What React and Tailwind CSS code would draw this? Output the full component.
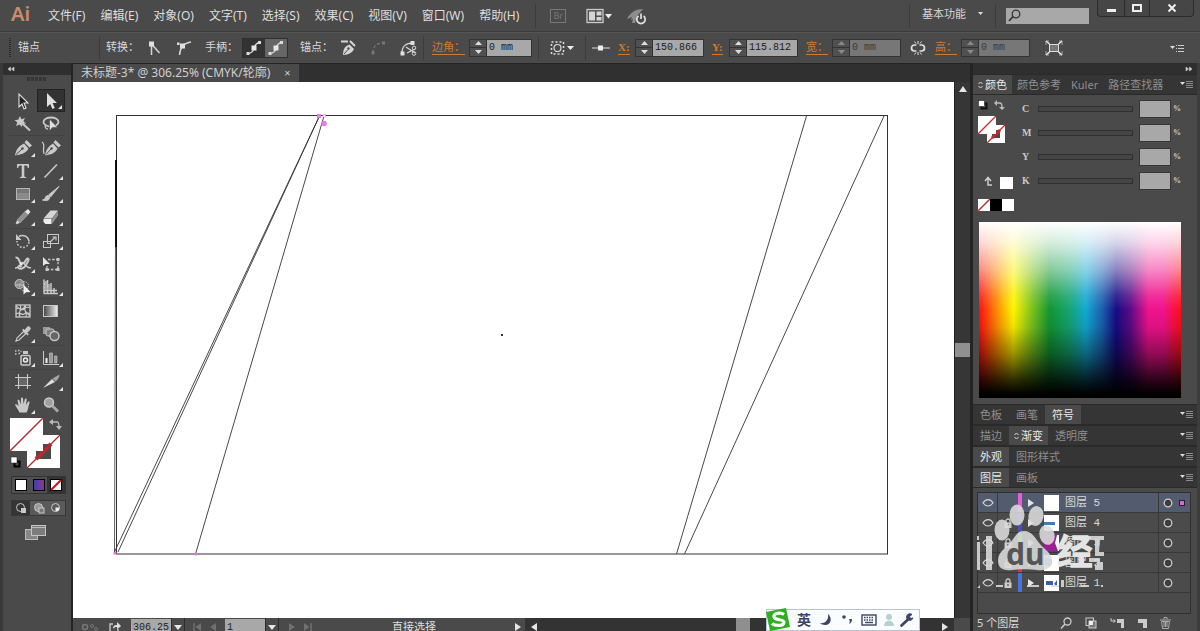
import React, { useState } from "react";

const MENUS = ["文件(F)", "编辑(E)", "对象(O)", "文字(T)", "选择(S)", "效果(C)", "视图(V)", "窗口(W)", "帮助(H)"];

const G = "#c9c9c9";

const Svg = ({ w = 20, h = 20, className = "", children }) => (
  <svg width={w} height={h} viewBox={`0 0 ${w} ${h}`} className={`shrink-0 ${className}`} fill="none" aria-hidden="true">
    {children}
  </svg>
);

// tool drawings, all on a 20x20 grid
const TOOL_GROUPS = [
  [
    { name: "选择", art: <path d="M6 3v13l3-3 2 5 2-1-2-5h4z" fill="#222" stroke="#e0e0e0" strokeWidth="1.1" /> },
    { name: "直接选择", more: true, art: <path d="M6 2v14l3.2-3 2.2 5 2.4-1-2.2-5H16z" fill="#e0e0e0" /> },
    {
      name: "魔棒",
      art: (
        <>
          <path d="M7 2l1.4 3.2L12 4l-1.6 3.2L13 9.5l-3.4.3L9 13l-2.4-2.6L3 12l1.4-3.4L1.5 6l3.7-.3z" fill={G} />
          <path d="M9.5 9.5l7.5 7" stroke={G} strokeWidth="2" />
        </>
      ),
    },
    {
      name: "套索",
      art: (
        <>
          <ellipse cx="10" cy="8" rx="7.5" ry="4.5" stroke={G} strokeWidth="1.8" />
          <path d="M5 11c-2 2 0 4 2 4" stroke={G} strokeWidth="1.3" />
          <path d="M8.5 5v12l3-3.6h5z" fill="#e0e0e0" stroke="#4a4a4a" strokeWidth=".6" />
        </>
      ),
    },
  ],
  [
    {
      name: "钢笔",
      more: true,
      art: (
        <>
          <path d="M2 17.5C3 11 6 8 11 5.500l4.500 5c-2 4-6.500 6-13.500 7z" fill={G} />
          <path d="M11.500 4.500l2-2.500 5.500 5.500-2.500 2z" fill={G} />
          <path d="M3 16.500l6-5.500" stroke="#4a4a4a" strokeWidth="1" />
          <circle cx="9.500" cy="10.500" r="1.200" fill="#4a4a4a" />
        </>
      ),
    },
    {
      name: "曲率",
      art: (
        <>
          <path d="M1 4c4 2 0 7 2 12" stroke={G} strokeWidth="1.300" />
          <path d="M4 17.5C5 11 8 8 12 5.500l4.500 5c-2 4-5.500 6-12.500 7z" fill={G} />
          <path d="M12.500 4.500l2-2.500L20 7.500l-2.500 2z" fill={G} />
          <path d="M5 16.500l5-5.500" stroke="#4a4a4a" />
          <circle cx="10.500" cy="10.500" r="1.200" fill="#4a4a4a" />
        </>
      ),
    },
    { name: "文字", more: true, art: <path d="M4 3h12v4h-1.200c-.2-1.600-.9-2.400-2.400-2.400H11.300V15c0 .8.400 1.100 1.900 1.200V17H6.800v-.8c1.500-.1 1.900-.4 1.900-1.200V4.600H7.600C6.100 4.600 5.400 5.400 5.200 7H4z" fill={G} /> },
    { name: "直线", more: true, art: <path d="M3.500 16.500l12.500-13" stroke={G} strokeWidth="1.600" /> },
    {
      name: "矩形",
      more: true,
      art: (
        <>
          <rect x="3.500" y="4.500" width="13" height="11" fill="#8a8a8a" stroke="#b5b5b5" />
          <rect x="4" y="5" width="12" height="4" fill="#777" />
        </>
      ),
    },
    {
      name: "画笔",
      more: true,
      art: (
        <>
          <path d="M18 2.500L9.500 13 7.500 11z" fill={G} stroke={G} />
          <path d="M8.500 12.500c1 3-2 5-7 3.500 3 0 2.500-3.500 4.500-4.500z" fill={G} stroke={G} />
        </>
      ),
    },
    {
      name: "铅笔",
      more: true,
      art: (
        <>
          <path d="M3 17l1.500-4.500 8-8.500 3 3-8 8.500z" fill="#8f8f8f" stroke="#a8a8a8" strokeWidth=".7" />
          <path d="M12 4.500l3-2.500 2.500 3L15 7.500z" fill="#e8e8e8" />
          <path d="M3 17l1.200-3.500 2.300 2.300z" fill="#e0e0e0" />
        </>
      ),
    },
    {
      name: "橡皮擦",
      more: true,
      art: (
        <>
          <path d="M2.500 11.500l7-8h7.500l-6 8z" fill="#d5d5d5" />
          <path d="M2.500 12h8v5h-6l-2-2z" fill="#eee" />
          <path d="M11 12l6-8v4.500L11 17z" fill="#8e8e8e" />
        </>
      ),
    },
  ],
  [
    {
      name: "旋转",
      more: true,
      art: (
        <>
          <path d="M6 5.500a6.500 6.500 0 0 1 10 5" stroke={G} strokeWidth="1.500" />
          <path d="M16 11a6 6 0 0 1-12-1" stroke={G} strokeWidth="1.500" strokeDasharray="1.800 1.600" />
          <path d="M3 3v6h5.500z" fill={G} />
        </>
      ),
    },
    {
      name: "比例缩放",
      more: true,
      art: (
        <>
          <rect x="6.500" y="3.500" width="11" height="9" stroke={G} />
          <rect x="2.500" y="10.500" width="7" height="6" stroke={G} />
          <path d="M9 11l5-4.500M11.500 6h3.500v3.500" stroke={G} strokeWidth="1.200" />
        </>
      ),
    },
    {
      name: "宽度",
      more: true,
      art: (
        <>
          <path d="M2.500 3.500c5-.5 2.500 6 6.500 6s2.500-3.500 5.500-5c2.500 0 0 3.500-1.500 6.500s-6 5-7.500 3c-1-1.500 1-3 3-1" stroke={G} strokeWidth="2" />
          <path d="M2 14c3 0 5-2 7-5s4 7 9 4.500" stroke={G} strokeWidth="1.500" />
          <circle cx="8" cy="10" r="1.500" fill="#eee" />
        </>
      ),
    },
    {
      name: "自由变换",
      art: (
        <>
          <path d="M7 5.500h10v10H6V12" stroke={G} strokeWidth="1.300" strokeDasharray="2.500 1.600" />
          <path d="M2 3v9l2.500-2H9z" fill="#e5e5e5" />
          <path d="M15.500 4h3v3h-3zM15.500 14h3v3h-3zM4.500 14h3v3h-3z" fill={G} />
        </>
      ),
    },
    {
      name: "形状生成器",
      more: true,
      art: (
        <>
          <circle cx="6.500" cy="7" r="4.500" fill="#858585" stroke={G} />
          <circle cx="11" cy="9" r="4.500" stroke={G} strokeDasharray="1.500 1" />
          <path d="M3 8h8" stroke={G} />
          <path d="M10.500 7.500v10l2.600-2.200 4.400-.3z" fill="#eee" />
        </>
      ),
    },
    {
      name: "透视网格",
      more: true,
      art: (
        <>
          <path d="M3 2.500v14M6.500 3v13.500M10 6v10.500M3 6l7 3M3 10l7 2M3 13.500h13M2.500 16.500H17M13 11v5.500" stroke={G} strokeWidth="1.500" />
          <path d="M4 4h2v9H4zM7 7h3v6H7z" fill="#a5a5a5" />
        </>
      ),
    },
  ],
  [
    {
      name: "网格",
      art: (
        <>
          <rect x="3" y="4" width="14" height="12" stroke={G} strokeWidth="1.300" />
          <path d="M3 8c4-3 5 3 8 0s3-1 6-2M3 13c4-3 6 2 8 0s3-2 6 0M7 4c3 4-3 8 0 12M12 4c-3 4 3 7 1 12M3 5l5 4 5-4M12 10l5 5" stroke={G} strokeWidth="1.200" />
        </>
      ),
    },
    {
      name: "渐变",
      art: (
        <>
          <defs>
            <linearGradient id="toolGrad">
              <stop offset="0" stopColor="#444" />
              <stop offset="1" stopColor="#f0f0f0" />
            </linearGradient>
          </defs>
          <rect x="2.500" y="4.500" width="14" height="11" fill="url(#toolGrad)" stroke={G} />
        </>
      ),
    },
    {
      name: "吸管",
      more: true,
      art: (
        <>
          <path d="M3 17l1-3 6.500-6.500 2.200 2.200L6 16z" stroke={G} strokeWidth="1.200" />
          <path d="M9 6l5.500 5.500 1.300-1.300-1.500-1.500L17.500 5.500c1-1.500-1.500-4-3-3L11.500 6l-1.200-1.200z" fill={G} />
        </>
      ),
    },
    {
      name: "混合",
      art: (
        <>
          <path d="M2 3h7v7H2z" fill="#999" />
          <rect x="5" y="5" width="8" height="7" rx="2" fill="#7d7d7d" stroke={G} />
          <circle cx="13.500" cy="12" r="4.500" fill="#666" stroke={G} strokeWidth="1.400" />
        </>
      ),
    },
  ],
  [
    {
      name: "符号喷枪",
      more: true,
      art: (
        <>
          <rect x="8" y="7.500" width="9" height="9.500" rx="1" stroke={G} strokeWidth="1.500" />
          <path d="M10 3h5v3h-5z" fill={G} />
          <circle cx="12.500" cy="12" r="2" stroke="#eee" strokeWidth="1.500" />
          <path d="M2 3h1.500M5 2.500h1.500M2 6h1.500M5.500 5.500h1.500M7.500 3.500h1" stroke={G} strokeWidth="1.500" />
        </>
      ),
    },
    {
      name: "柱形图",
      more: true,
      art: (
        <>
          <path d="M2.500 3v13.500H18" stroke={G} />
          <path d="M4.500 10h2v5h-2z" fill="#eee" />
          <path d="M8.500 5h3v10h-3z" fill="#999" stroke={G} strokeWidth=".6" />
          <path d="M13.500 8h2.500v7h-2.500z" fill="#999" stroke={G} strokeWidth=".6" />
        </>
      ),
    },
  ],
  [
    {
      name: "画板",
      art: (
        <>
          <rect x="5.500" y="5.500" width="9" height="8" fill="#666" />
          <path d="M5.500 2v15M14.500 2v15M2 5.500h16M2 13.500h16" stroke={G} strokeWidth="1.100" />
        </>
      ),
    },
    {
      name: "切片",
      more: true,
      art: (
        <>
          <path d="M2 16l9-9 3 3z" fill="#e0e0e0" />
          <path d="M11.500 6.500L18.500 2.500c0 2.500-1.500 5-4 7z" fill="#a5a5a5" />
        </>
      ),
    },
    {
      name: "抓手",
      more: true,
      art: <path d="M6.500 17.500C5 14.500 3 12 2 9.500c1.500-.8 2.600.5 3.500 1.500L4.500 5c1.400-.8 2 .3 2.300 1.500l.9 3L8 3c1.200-1 2-.2 2.100 1l.4 5 1.500-5.300c1.200-.7 1.900.1 1.700 1.300L12.900 10l2.300-3.500c1.200-.4 1.700.4 1.300 1.500-1.300 3-1 6.500-3 9.500z" fill={G} />,
    },
    {
      name: "缩放",
      art: (
        <>
          <circle cx="8" cy="7.500" r="4.500" fill="#a0a0a0" stroke={G} strokeWidth="1.500" />
          <path d="M11.500 11l5.500 5.500" stroke="#a8a8a8" strokeWidth="2.800" />
        </>
      ),
    },
  ],
];

const Toolbox = () => {
  const [tool, setTool] = useState("直接选择");
  return (
    <aside className="flex w-[73px] shrink-0 flex-col border-l-[3px] border-r-2 border-l-[#3a3a3a] border-r-[#242424] bg-[#4a4a4a]">
      <div className="flex h-3 items-center bg-[#2f2f2f] pl-1">
        <Svg w={8} h={6}>
          <path d="M3.500 1L1 3l2.500 2zM7 1L4.500 3 7 5z" fill="#ccc" stroke="#ccc" strokeWidth=".6" />
        </Svg>
      </div>
      <div className="flex h-3.5 justify-center pt-0.5">
        <Svg w={20} h={4}>
          <path d="M0 1h20M0 3h20" stroke="#222" strokeDasharray="3 1" />
        </Svg>
      </div>
      <div className="flex flex-col px-1.5">
        {TOOL_GROUPS.map((group, i) => (
          <div key={i} className={`grid grid-cols-2 ${i ? "border-t border-[#424242]" : ""}`}>
            {group.map((t) => (
              <button
                key={t.name}
                aria-label={t.name}
                onClick={() => setTool(t.name)}
                className={`relative flex h-[23px] items-center justify-center ${tool === t.name ? "border border-[#232323] bg-[#333]" : ""}`}
              >
                <Svg w={20} h={20}>{t.art}</Svg>
                {t.more && (
                  <svg width="4" height="4" className="absolute right-0.5 bottom-0.5" aria-hidden="true">
                    <path d="M4 0v4H0z" fill="#e5e5e5" />
                  </svg>
                )}
              </button>
            ))}
          </div>
        ))}
      </div>
      <div className="pl-1.5">
        <Svg w={56} h={54}>
          <path d="M18 19h33v33H18zM27 28v15h15V28z" fill="#fff" fillRule="evenodd" />
          <path d="M18 52l33-33" stroke="#b22b2f" strokeWidth="1.300" />
          <path d="M27 43l15-15" stroke="#b22b2f" strokeWidth="4" />
          <rect x="1" y="2" width="33" height="33" fill="#fff" />
          <path d="M1 35L34 2" stroke="#b22b2f" strokeWidth="1.500" />
          <path d="M43 6h5c2 0 2 2 2 5" stroke="#bbb" strokeWidth="1.300" />
          <path d="M44 3v6l-4-3zM47 10h6l-3 4z" fill="#bbb" />
          <rect x="5.500" y="45.500" width="5" height="5" stroke="#000" strokeWidth="2" />
          <rect x="2" y="41" width="6" height="6" fill="#fff" stroke="#222" strokeWidth=".5" />
        </Svg>
      </div>
      <div className="mt-1.5 ml-2 flex h-[18px] w-[55px] border border-[#333]">
        <button aria-label="颜色" className="flex flex-1 items-center justify-center bg-[#505050]">
          <span className="size-3 border border-black bg-white" />
        </button>
        <button aria-label="渐变" className="flex flex-1 items-center justify-center bg-[#505050]">
          <span className="size-3 border border-black bg-linear-to-r from-[#3a3ea8] to-[#8a3690]" />
        </button>
        <button aria-label="无" className="flex flex-1 items-center justify-center bg-[#333]">
          <Svg w={12} h={12}>
            <rect x=".5" y=".5" width="11" height="11" fill="#fff" stroke="#000" />
            <path d="M1 11L11 1" stroke="#d0111b" strokeWidth="2" />
          </Svg>
        </button>
      </div>
      <div className="mt-1.5 ml-2 flex h-4 w-[55px] border border-[#383838]">
        {[0, 1, 2].map((n) => (
          <button key={n} aria-label={`绘图模式 ${n + 1}`} className={`flex flex-1 items-center justify-center ${n === 0 ? "bg-[#353535]" : "bg-[#5a5a5a]"}`}>
            <Svg w={12} h={12}>
              <circle cx="5.500" cy="5.500" r="4" fill={n === 1 ? "#999" : "none"} stroke={G} />
              {n < 2 ? <rect x="6" y="6" width="5" height="5" fill={n ? "#777" : G} stroke={n ? G : "none"} /> : <path d="M5.500 5.500h4a4 4 0 0 1-4 4z" fill="#eee" />}
            </Svg>
          </button>
        ))}
      </div>
      <button aria-label="屏幕模式" className="mt-2 ml-[22px] w-[22px]">
        <Svg w={22} h={17}>
          <rect x=".5" y="5.500" width="12" height="10" fill="#888" stroke="#bbb" />
          <rect x="6.500" y="1.500" width="14" height="10" fill="#7c7c7c" stroke="#c5c5c5" />
          <path d="M7 3.500h13" stroke="#bbb" />
        </Svg>
      </button>
    </aside>
  );
};

const Divider = () => <span className="h-6 w-px shrink-0 bg-[#3c3c3c]" />;

const Spinner = ({ label, value, disabled, wide = true }) => (
  <div className={`flex h-[18px] shrink-0 border border-[#333] ${wide ? "w-[69px]" : "w-[63px]"}`}>
    <div className="flex w-4 shrink-0 flex-col bg-[#505050]">
      <button aria-label={`${label} 增加`} disabled={disabled} className="flex flex-1 items-center justify-center border-b border-[#333]">
        <Svg w={7} h={4}><path d="M3.500 0L7 4H0z" fill={disabled ? "#8a8a8a" : "#ddd"} /></Svg>
      </button>
      <button aria-label={`${label} 减少`} disabled={disabled} className="flex flex-1 items-center justify-center">
        <Svg w={7} h={4}><path d="M3.500 4L7 0H0z" fill={disabled ? "#8a8a8a" : "#ddd"} /></Svg>
      </button>
    </div>
    <input
      aria-label={label}
      defaultValue={value}
      disabled={disabled}
      className={`min-w-0 flex-1 border-l border-[#333] pl-0.5 font-['Liberation_Mono',monospace] text-[10px] ${disabled ? "bg-[#777] text-[#3c3c3c]" : "bg-[#a8a8a8] text-[#1c1c1c]"}`}
    />
  </div>
);

const OrangeLabel = ({ children }) => (
  <button className="shrink-0 border-b border-[#d07a2c] text-[11px] leading-[14px] text-[#d07a2c]">{children}</button>
);

const IconCell = ({ label, dim, className = "w-[30px]", children }) => (
  <button aria-label={label} className={`flex h-5 shrink-0 items-center justify-center ${dim ? "opacity-40" : ""} ${className}`}>
    {children}
  </button>
);

const handleArt = (
  <>
    <path d="M2.500 14.500C7 14.500 8 12 9 9s3-5 5.500-5.500" stroke="#ddd" strokeWidth="1.300" />
    <path d="M6.500 6.500h5v5h-5z" fill="#e8e8e8" />
    <path d="M13 2h3v3h-3zM1.500 13h3v3h-3z" fill="#ddd" />
  </>
);

const ControlBar = () => (
  <div className="flex h-8 shrink-0 items-center overflow-hidden border-t border-[#3a3a3a] bg-[#4a4a4a] pr-4 pl-2 text-[11px] text-[#d8d8d8] shadow-[inset_0_1px_0_#555]">
    <Svg w={4} h={20}><path d="M2 0v20" stroke="#2d2d2d" strokeWidth="2" strokeDasharray="1 1" /></Svg>
    <span className="ml-1.5 w-[81px] shrink-0">锚点</span>
    <Divider />
    <span className="ml-1.5 shrink-0">转换：</span>
    <IconCell label="尖角">
      <Svg w={18} h={18}><path d="M6.500 5v11M6.500 5l8 9" stroke="#d5d5d5" strokeWidth="1.500" /><path d="M4 2.500h5v5H4z" fill="#e0e0e0" /></Svg>
    </IconCell>
    <IconCell label="平滑">
      <Svg w={18} h={18}><path d="M4.500 16C5 9 8 4 16 3" stroke="#d5d5d5" strokeWidth="1.500" /><path d="M5 4.500h5v5H5zM2 3.500h2.500V6H2z" fill="#e0e0e0" /></Svg>
    </IconCell>
    <span className="ml-1.5 shrink-0">手柄：</span>
    <div className="ml-1 flex h-5 shrink-0 border border-[#2e2e2e]">
      <button aria-label="显示手柄" className="flex w-[22px] items-center justify-center bg-[#333]"><Svg w={18} h={18}>{handleArt}</Svg></button>
      <button aria-label="隐藏手柄" className="flex w-[22px] items-center justify-center bg-[#666]"><Svg w={18} h={18}>{handleArt}</Svg></button>
    </div>
    <span className="ml-3 shrink-0">锚点：</span>
    <IconCell label="删除锚点">
      <Svg w={18} h={18}>
        <path d="M4 16c0-6 2-9 6.500-10.500L15 10c-2 4-5 5.500-11 6z" fill="#d5d5d5" />
        <path d="M2 2.500h7M11 2l5 5" stroke="#d5d5d5" strokeWidth="2" />
        <path d="M5 15l4-4.500" stroke="#4a4a4a" />
        <circle cx="9.500" cy="9.500" r="1.200" fill="#4a4a4a" />
      </Svg>
    </IconCell>
    <IconCell label="连接" dim>
      <Svg w={18} h={18}><path d="M4 14c0-6 3-10 10-10" stroke="#bbb" strokeWidth="1.300" strokeDasharray="3 2" /><path d="M2.500 12.500h3v3h-3zM13 2.500h3v3h-3z" fill="#bbb" /></Svg>
    </IconCell>
    <IconCell label="剪切路径">
      <Svg w={18} h={18}>
        <path d="M3 14C3 7 7 4 14 4M7 8l9 6M8 14l8-4" stroke="#d5d5d5" strokeWidth="1.300" />
        <path d="M1.500 12.500h4v4h-4zM11.500 2h4v4h-4z" fill="#e0e0e0" />
        <circle cx="15" cy="9" r="1.800" stroke="#d5d5d5" /><circle cx="15" cy="14.500" r="1.800" stroke="#d5d5d5" />
      </Svg>
    </IconCell>
    <Divider />
    <span className="ml-2 flex shrink-0"><OrangeLabel>边角：</OrangeLabel></span>
    <span className="ml-1 flex"><Spinner label="边角" value="0 mm" wide={false} /></span>
    <span className="ml-1.5 flex"><Divider /></span>
    <IconCell label="对齐" className="w-[46px]">
      <Svg w={24} h={16}>
        <rect x="1.500" y="2" width="12" height="12" stroke="#ddd" strokeWidth="1.500" strokeDasharray="2 2" />
        <circle cx="7.500" cy="8" r="3.500" stroke="#ddd" strokeWidth="1.200" />
        <path d="M17 6h7l-3.500 4z" fill="#eee" />
      </Svg>
    </IconCell>
    <Divider />
    <IconCell label="参考点"><Svg w={18} h={8}><path d="M0 4h18" stroke="#ddd" /><path d="M6 1.500h5v5H6z" fill="#eee" /></Svg></IconCell>
    <span className="ml-0.5 flex w-[11px]"><OrangeLabel><span className="font-['Liberation_Serif',serif] font-bold">X:</span></OrangeLabel></span>
    <span className="ml-1.5 flex"><Spinner label="X" value="150.866 mm" /></span>
    <span className="ml-2 flex w-[11px]"><OrangeLabel><span className="font-['Liberation_Serif',serif] font-bold">Y:</span></OrangeLabel></span>
    <span className="ml-1.5 flex"><Spinner label="Y" value="115.812 mm" /></span>
    <span className="ml-2 flex"><OrangeLabel>宽：</OrangeLabel></span>
    <span className="ml-1 flex"><Spinner label="宽" value="0 mm" disabled /></span>
    <IconCell label="约束宽高比例" className="w-[34px]">
      <Svg w={16} h={16}>
        <path d="M6.500 5H4.500a3 3 0 0 0 0 6h2M9.500 5h2a3 3 0 0 1 0 6h-2" stroke="#e0e0e0" strokeWidth="1.700" />
        <path d="M8 1v3M8 12v3M4.500 1.500L6 3.500M11.500 1.500L10 3.500M4.500 14.500L6 12.500M11.500 14.500L10 12.500" stroke="#ddd" />
      </Svg>
    </IconCell>
    <OrangeLabel>高：</OrangeLabel>
    <span className="ml-1 flex"><Spinner label="高" value="0 mm" disabled /></span>
    <IconCell label="隔离" className="w-[48px]">
      <Svg w={18} h={16}>
        <rect x="4.500" y="4.500" width="9" height="7" fill="#777" stroke="#ddd" />
        <path d="M1 1l3.500 3M17 1l-3.500 3M1 15l3.500-3M17 15l-3.500-3" stroke="#eee" strokeWidth="1.500" />
        <path d="M1 5V1h3M17 5V1h-3M1 11v4h3M17 11v4h-3" stroke="#ccc" strokeWidth=".7" />
      </Svg>
    </IconCell>
    <button aria-label="面板菜单" className="ml-auto">
      <Svg w={14} h={10}><path d="M0 3h5L2.500 6z" fill="#ddd" /><path d="M6 2.500h8M6 5.500h8M6 8.500h8" stroke="#ccc" strokeDasharray="1 1 8 0" /></Svg>
    </button>
  </div>
);

const MenuBar = () => (
  <header className="flex h-[31px] shrink-0 items-center bg-[#4a4a4a] pr-1.5 pl-[11px] text-[#dedede]">
    <span className="w-[37px] shrink-0 pb-1 text-[20px] leading-6 font-semibold text-[#c98d69]">Ai</span>
    <nav className="flex shrink-0 gap-[15px]">
      {MENUS.map((m) => (
        <button key={m} className="text-[12px] leading-5 whitespace-nowrap">{m}</button>
      ))}
    </nav>
    <span className="ml-4 flex"><Divider /></span>
    <button aria-label="Bridge" className="ml-3.5 flex h-[14px] w-4 shrink-0 items-center justify-center border border-[#777] text-[9px] leading-none text-[#777]">Br</button>
    <button aria-label="排列文档" className="ml-5 shrink-0">
      <Svg w={26} h={16}>
        <rect x="1" y="1.500" width="16" height="13" stroke="#ccc" strokeWidth="1.300" />
        <path d="M3 3.500h6v9H3zM10.500 3.500h5v4h-5zM10.500 9h5v3.500h-5z" fill="#d5d5d5" />
        <path d="M19 6h7l-3.500 4.500z" fill="#eee" />
      </Svg>
    </button>
    <button aria-label="GPU 性能" className="ml-3.5 shrink-0">
      <Svg w={22} h={18}>
        <path d="M1 12C4 6 9 2 17 2L11 9 9 16H6l1-4-2 1 1-3z" fill="#8d8d8d" />
        <path d="M12.500 9a4.200 4.200 0 1 0 5 0" stroke="#e0e0e0" strokeWidth="1.700" />
        <path d="M15 6.500V12" stroke="#e0e0e0" strokeWidth="1.700" />
      </Svg>
    </button>
    <div className="ml-auto flex h-full shrink-0 items-center">
      <Divider />
      <button className="ml-3 flex items-center gap-3 pb-1 text-[11px] leading-5 text-[#d5d5d5]">
        基本功能
        <Svg w={5} h={3}><path d="M0 0h5L2.500 3z" fill="#ddd" /></Svg>
      </button>
      <span className="ml-3 flex"><Divider /></span>
      <label className="ml-2.5 flex h-4 w-[83px] items-center bg-[#a8a8a8] pl-0.5">
        <Svg w={13} h={13}><circle cx="8" cy="5" r="3.800" stroke="#333" strokeWidth="1.300" /><path d="M5 7.500L1 12" stroke="#333" strokeWidth="1.800" /></Svg>
        <input type="search" aria-label="搜索" className="min-w-0 flex-1 text-[10px] text-[#222] outline-none" />
      </label>
      <div className="ml-2 flex h-[17px] self-start rounded-b-sm border border-t-0 border-[#2c2c2c] bg-[#464646]">
        <button aria-label="最小化" className="flex w-[27px] items-center justify-center border-r border-[#2c2c2c]">
          <Svg w={10} h={10}><path d="M1 6h9v3H1z" fill="#eee" /></Svg>
        </button>
        <button aria-label="最大化" className="flex w-[25px] items-center justify-center border-r border-[#2c2c2c]">
          <Svg w={10} h={10}><rect x="1" y="2" width="8" height="6" stroke="#eee" strokeWidth="2" /></Svg>
        </button>
        <button aria-label="关闭" className="flex w-[43px] items-center justify-center">
          <Svg w={10} h={10}><path d="M1.500 1.500l7 7M8.500 1.500l-7 7" stroke="#eee" strokeWidth="2" /></Svg>
        </button>
      </div>
    </div>
  </header>
);

// outline-mode artwork on the canvas
const Artwork = () => (
  <svg viewBox="0 0 881 536" className="block h-full w-full bg-white" preserveAspectRatio="xMinYMin meet" role="img" aria-label="画布">
    <g stroke="#333" fill="none">
      <rect x="43.500" y="33.500" width="771" height="438.500" />
      <path d="M251 34L122.500 472M733.500 34L603.500 472M811 34L611.500 472" strokeWidth=".9" />
      <path d="M246 35L41.500 470M246 35L45 470" strokeWidth=".9" />
      <path d="M43 78v87" stroke="#000" strokeWidth="1.800" />
      <path d="M42.500 165L41.500 471" strokeWidth=".8" />
      <path d="M428 252l2 2M430 252l-2 2" />
    </g>
    <g fill="#e07be0">
      <path d="M244 32h4v4h-4zM40.500 470h3v2.500h-3zM121.500 471h2.500v2.500h-2.500z" />
      <circle cx="251" cy="41.500" r="2.800" />
      <rect x="250" y="32.500" width="2.500" height="2.500" fill="#fff" stroke="#e07be0" strokeWidth=".6" />
    </g>
  </svg>
);

const Arrow = ({ dir, dim }) => (
  <Svg w={6} h={8}><path d={dir === "left" ? "M6 0v8L0 4z" : "M0 0v8l6-4z"} fill={dim ? "#707070" : "#e5e5e5"} /></Svg>
);

const DownBox = ({ label }) => (
  <button aria-label={label} className="flex h-5 w-3.5 shrink-0 items-center justify-center border border-[#2e2e2e] bg-[#4a4a4a]">
    <Svg w={8} h={5}><path d="M0 0h8L4 5z" fill="#e5e5e5" /></Svg>
  </button>
);

const StatusBar = () => (
  <div className="h-[13px] shrink-0 overflow-hidden bg-[#4a4a4a]">
    <div className="flex h-[18px] items-center">
      <div className="flex w-[452px] shrink-0 items-center pl-2">
        <Svg w={18} h={8}><circle cx="4" cy="4" r="2.500" stroke="#777" strokeWidth="1.500" /><circle cx="11" cy="3" r="1.500" stroke="#777" /><circle cx="15" cy="6" r="1.500" stroke="#777" /></Svg>
        <span className="ml-2.5 flex"><Svg w={12} h={12}><path d="M4 3H1v8h8V8" stroke="#ccc" strokeWidth="1.300" /><path d="M4 8c0-3 1-4 4-4V1l4 4-4 3.500V6C6 6 5 6.500 4 8z" fill="#ddd" /></Svg></span>
        <input aria-label="缩放比例" defaultValue="306.25" className="ml-2.5 h-4 w-10 shrink-0 bg-[#a8a8a8] pl-0.5 font-['Liberation_Mono',monospace] text-[10px] text-[#222]" />
        <DownBox label="选择缩放比例" />
        <span className="ml-2 flex w-8 items-center gap-2"><svg width="9" height="8"><path d="M1 0v8" stroke="#707070" strokeWidth="1.500" /><path d="M8 0v8L2.500 4z" fill="#707070" /></svg><Arrow dir="left" dim /></span>
        <input aria-label="画板" defaultValue="1" className="h-4 w-10 shrink-0 bg-[#a8a8a8] pl-0.5 font-['Liberation_Mono',monospace] text-[10px] text-[#222]" />
        <DownBox label="选择画板" />
        <span className="ml-2.5 flex items-center gap-2"><Arrow dir="right" dim /><svg width="9" height="8"><path d="M8 0v8" stroke="#707070" strokeWidth="1.500" /><path d="M1 0v8l5.500-4z" fill="#707070" /></svg></span>
        <span className="ml-20 text-[11px] leading-5 text-[#ddd]">直接选择</span>
        <span className="ml-auto flex pr-1"><Arrow dir="right" /></span>
      </div>
      <div className="flex h-[18px] flex-1 items-center bg-[#333] px-1.5">
        <Arrow dir="left" />
        <span className="flex h-[18px] flex-1 justify-center pl-1.5"><span className="h-[18px] w-3.5 bg-[#8f8f8f]" /></span>
        <Arrow dir="right" />
      </div>
      <div className="h-[18px] w-4 bg-[#4a4a4a]" />
    </div>
  </div>
);

const ImeBar = () => (
  <div className="absolute right-[50px] bottom-0 flex h-[22px] items-center border border-[#b9c3d3] bg-[#fbfcfe] text-[#3d4466]">
    <Svg w={26} h={24} className="-ml-0.5">
      <path d="M1 4L21 0l4 19-20 4z" fill="#2fae1e" />
      <path d="M19 6.500C15.500 4 8 5 9 9s10.500 1.500 10 5.500S10 18 7 15.500" stroke="#fff" strokeWidth="3.200" />
    </Svg>
    <span className="ml-1.5 text-[14px] leading-5 font-bold">英</span>
    <Svg w={14} h={14} className="ml-2"><path d="M9 1c4 3 4 11-3 11-2 0-4-1-5-2 5 1 9-3 8-9z" fill="currentColor" /></Svg>
    <Svg w={12} h={14} className="ml-2"><circle cx="3" cy="4" r="1.800" fill="currentColor" /><path d="M8 6h3c0 3-1 4-3 5 1-2 1-3 0-5z" fill="currentColor" /></Svg>
    <Svg w={16} h={12} className="ml-2"><rect x="1" y="1" width="14" height="10" stroke="currentColor" strokeWidth="1.400" /><path d="M3 3.500h10M3 6h10" stroke="currentColor" strokeWidth="1.400" strokeDasharray="1.500 1" /><path d="M4 8.500h8" stroke="currentColor" strokeWidth="1.400" /></Svg>
    <Svg w={12} h={14} className="ml-1.5"><circle cx="6" cy="4" r="3" fill="#b5d1cf" /><path d="M1 13c0-7 10-7 10 0z" fill="#b5d1cf" /></Svg>
    <Svg w={16} h={16} className="mx-1"><path d="M2.500 13.500L9 7.500" stroke="currentColor" strokeWidth="2.800" strokeLinecap="round" /><path d="M13 2.500a3.300 3.300 0 1 0 1 3.500l-2.500.5-1-2z" fill="currentColor" stroke="currentColor" /></Svg>
  </div>
);

const Document = () => (
  <main className="relative flex min-w-0 flex-1 flex-col bg-[#303030]">
    <div className="flex h-[19px] shrink-0 border-t border-[#242424]">
      <div className="flex items-center bg-[#4a4a4a] px-2 text-[12px] leading-4 whitespace-nowrap text-[#cfcfcf]">
        未标题-3* @ 306.25% (CMYK/轮廓)
        <button aria-label="关闭文档" className="ml-3.5 text-[11px] leading-4">×</button>
      </div>
    </div>
    <div className="flex min-h-0 flex-1">
      <div className="min-w-0 flex-1 bg-white"><Artwork /></div>
      <div className="flex w-4 shrink-0 flex-col items-center border-l border-[#222] bg-[#363636] pt-1">
        <Svg w={8} h={6}><path d="M4 0l4 6H0z" fill="#e5e5e5" /></Svg>
        <span className="flex w-full flex-1 items-center"><span className="h-3.5 w-full bg-[#909090]" /></span>
        <span className="h-2.5" />
      </div>
    </div>
    <StatusBar />
    <ImeBar />
  </main>
);

const UpDown = () => (
  <Svg w={5} h={8}><path d="M.5 3l2-2 2 2M.5 5l2 2 2-2" stroke="#ddd" /></Svg>
);

const TabRow = ({ tabs, active, arrows }) => (
  <div className="flex h-[21px] shrink-0 items-stretch border-t border-b border-[#2a2a2a] bg-[#353535]" role="tablist">
    {tabs.map((t) => (
      <button
        key={t}
        role="tab"
        aria-selected={t === active}
        className={`flex items-center gap-0.5 text-[11px] leading-4 whitespace-nowrap ${t === active ? "bg-[#4a4a4a] text-[#e8e8e8]" : "text-[#8f8f8f]"} ${(arrows && t === active) || tabs.length > 3 ? "px-[5px]" : "px-[7px]"}`}
      >
        {arrows && t === active && <UpDown />}
        {t}
      </button>
    ))}
    <button aria-label="面板菜单" className="ml-auto flex items-center pr-1">
      <Svg w={13} h={8}><path d="M0 1h5L2.500 4z" fill="#ddd" /><path d="M6 .5h7M6 2.500h7M6 4.500h7M6 6.500h7" stroke="#8a8a8a" /></Svg>
    </button>
  </div>
);

const ColorPanel = () => (
  <section className="shrink-0 pb-1.5">
    <div className="flex">
      <div className="flex w-[49px] shrink-0 flex-col pt-[3px] pl-1">
        <Svg w={36} h={50}>
          <rect x="4.500" y="5.500" width="5" height="5" stroke="#111" strokeWidth="2" />
          <rect x="1.500" y="2.500" width="6" height="6" fill="#fff" stroke="#222" strokeWidth=".6" />
          <path d="M19 5h4c2 0 2 2 2 4" stroke="#bbb" strokeWidth="1.300" />
          <path d="M20 2v6l-3-3zM22 9h6l-3 3z" fill="#bbb" />
          <path d="M10 27h18v18H10zM15 32v8h8v-8z" fill="#fff" fillRule="evenodd" />
          <path d="M10 45l18-18" stroke="#c22a2f" strokeWidth="1.300" />
          <path d="M15 40l8-8" stroke="#c22a2f" strokeWidth="3" />
          <rect x="1" y="18" width="18" height="18" fill="#fff" />
          <path d="M1 36L19 18" stroke="#c22a2f" strokeWidth="1.300" />
        </Svg>
        <Svg w={40} h={62} className="mt-0.5">
          <path d="M8 31l3-3.500 3 3.500M11 28v7h4" fill="none" stroke="#ccc" strokeWidth="1.500" />
          <rect x="23" y="27" width="13" height="12" fill="#fff" />
          <rect x="1" y="49" width="12" height="12" fill="#fff" />
          <path d="M1 61l12-12" stroke="#c22a2f" strokeWidth="1.500" />
          <rect x="13" y="49" width="12" height="12" fill="#000" />
          <rect x="25" y="49" width="12" height="12" fill="#fff" />
        </Svg>
      </div>
      <div className="flex flex-1 flex-col gap-[5px] pt-1 pr-4">
        {["C", "M", "Y", "K"].map((c) => (
          <div key={c} className="flex h-[19px] items-center font-['Liberation_Serif',serif] text-[10px] font-bold text-[#c8c8c8]">
            <label htmlFor={`ink-${c}`} className="w-4">{c}</label>
            <div className="h-1.5 flex-1 border border-[#303030] bg-[#454545]" />
            <input id={`ink-${c}`} className="ml-1.5 h-[18px] w-8 border border-[#363636] bg-[#a8a8a8] px-1 text-[10px] text-[#222]" />
            <span className="ml-0.5 w-2 text-[8px]">%</span>
          </div>
        ))}
      </div>
    </div>
    <div className="mt-2.5 mr-4 ml-1.5 h-[176px] bg-[linear-gradient(to_bottom,#fff_0%,rgba(255,255,255,.82)_12%,rgba(255,255,255,.5)_27%,rgba(255,255,255,.12)_42%,rgba(255,255,255,0)_50%,rgba(0,0,0,0)_50%,rgba(0,0,0,.08)_60%,rgba(0,0,0,.4)_75%,rgba(0,0,0,.82)_90%,#000_98%),linear-gradient(to_right,#ff0d10_0%,#ff9a00_10%,#fff500_17%,#7fc41c_26%,#129633_35%,#14a36c_44%,#12a8d2_53%,#1a5fae_61%,#160a84_68%,#5d0a86_75%,#f0128c_84%,#f0128c_91%,#ff0d18_100%)]" />
  </section>
);

const LAYERS = [
  { n: "图层 5", bar: "bg-[#e45fe0]" },
  { n: "图层 4", bar: "bg-[#4a4fc4]", locked: true, thumb: <path d="M0 7h11v3H0z" fill="#4a78b4" /> },
  { n: "图层 3", bar: "bg-[#3fd04a]", locked: true, thumb: <path d="M0 0h13l-2 8 3 8H0z" fill="#9c1f96" /> },
  { n: "图层 2", bar: "bg-[#d83a3a]", locked: true, thumb: <circle cx="4" cy="7" r="4" fill="#8fc3e6" /> },
  { n: "图层 1", bar: "bg-[#4674dc]", locked: true, thumb: <path d="M2 6h7v4H2zM10 9l3-4v6z" fill="#3b5ea8" /> },
];

const Watermark = () => (
  <div className="pointer-events-none absolute top-3 left-1 h-[88px] w-[132px] text-[#e4e4e4]" aria-hidden="true">
    <svg width="132" height="88" className="absolute inset-0">
      <g fill="#dcdcdc" opacity=".88">
        <ellipse cx="25" cy="30" rx="7.500" ry="10.500" />
        <ellipse cx="40" cy="15" rx="7.500" ry="10.500" />
        <ellipse cx="59" cy="16" rx="7.500" ry="10" transform="rotate(10 59 16)" />
        <ellipse cx="70" cy="35" rx="7.500" ry="10" transform="rotate(-15 70 35)" />
        <path d="M47 31c8 0 11 7 16 13s12 9 12 17-8 10-15 9-18-1-25 0-14-1-14-9 5-11 11-17 7-13 15-13z" />
        <path d="M0 36h2v4H0zM0 42h3v28H0zM9 36h6v34H9z" />
        <path d="M113 36h14v4h-4l-1 12h5v4h-9V40h-5zM112 58h11v4h-11zM120 62h6v8h-8v-4h2z" />
        <path d="M0 88l3-3v3zM19 85h7v2h-7zM50 85h12v2H50zM74 85h8v2h-8zM84 80h3v7h-3zM104 85h8v2h-8zM124 85h2v2h-2z" />
      </g>
    </svg>
    <span className="absolute top-[40px] left-[29px] text-[30px] leading-7 font-bold text-[#555]">du</span>
    <span className="absolute top-[34px] left-[80px] text-[36px] leading-9 font-black">经</span>
  </div>
);

const LayersPanel = () => (
  <section className="relative flex min-h-0 flex-1 flex-col pt-1 pr-1.5 pl-1">
    <ul className="flex min-h-0 flex-1 flex-col border border-[#2f2f2f] font-['Liberation_Mono','Noto_Sans_CJK_SC',monospace] text-[11px] text-[#d8d8d8]">
      {LAYERS.map((l, i) => (
        <li key={l.n} className={`flex h-5 shrink-0 items-center border-b border-[#383838] ${i === 0 ? "bg-[#525c6e]" : "bg-[#4b4b4b]"}`}>
          <button aria-label="切换可视性" className="flex h-full w-5 items-center justify-center border-r border-[#3a3a3a]">
            <Svg w={12} h={10}><path d="M1 5c3-5 8-4 10 0-3 4-7 4-10 0z" stroke="#d5d5d5" strokeWidth="1.200" /></Svg>
          </button>
          <span className="flex h-full w-5 items-center justify-center">
            {l.locked && <Svg w={8} h={10}><path d="M2 5V3a2 2 0 0 1 4 0v2" stroke="#ccc" strokeWidth="1.300" /><path d="M.5 4.500h7V10h-7z" fill="#ccc" /><path d="M4 6v2" stroke="#333" /></Svg>}
          </span>
          <span className={`h-full w-1 ${l.bar}`} />
          <button aria-label="展开" className="ml-1.5 flex w-4"><Svg w={6} h={8}><path d="M0 0v8l6-4z" fill="#e5e5e5" /></Svg></button>
          <Svg w={15} h={16}><rect width="15" height="16" fill="#fff" />{l.thumb}</Svg>
          <span className="ml-1.5 flex-1 leading-5 whitespace-nowrap">{l.n}</span>
          <span className="flex h-full w-8 items-center gap-1.5 border-l border-[#383838] pl-1">
            <Svg w={10} h={10}><circle cx="5" cy="5" r="3.800" fill="#3d3d3d" stroke="#ccc" strokeWidth="1.300" /></Svg>
            {i === 0 && <span className="size-1.5 border border-[#222] bg-[#e45fe0]" />}
          </span>
        </li>
      ))}
    </ul>
    <Watermark />
    <div className="flex h-[17px] shrink-0 items-center text-[11px] text-[#d8d8d8]">
      <span className="leading-4">5 个图层</span>
      <span className="ml-auto flex items-center gap-[13px] pr-5">
        <button aria-label="定位对象"><Svg w={12} h={12}><circle cx="7.500" cy="4.500" r="3.500" stroke="#ccc" strokeWidth="1.300" /><path d="M5 7L1 11.500" stroke="#ccc" strokeWidth="1.500" /></Svg></button>
        <button aria-label="剪切蒙版"><Svg w={12} h={12}><rect x="1" y="1" width="7.500" height="7.500" stroke="#ccc" /><rect x="4" y="4" width="7" height="7" fill="#777" stroke="#ccc" /><path d="M4 4h4v4H4z" fill="#eee" /></Svg></button>
        <button aria-label="新建子图层"><Svg w={14} h={12}><path d="M1 1v3h4M3.500 2.500L5.500 4l-2 1.500" stroke="#ccc" /><path d="M7 2h7v9h-3V6H7z" fill="#ccc" /></Svg></button>
        <button aria-label="新建图层"><Svg w={10} h={12}><path d="M1 2h9v9H6V6H1z" fill="#ccc" /></Svg></button>
        <button aria-label="删除"><Svg w={11} h={12}><path d="M0 3h11M4 2V.5h3V2M1.500 4.500L2.500 11.500h6l1-7zM4 5v5M5.500 5v5M7 5v5" stroke="#aaa" /></Svg></button>
      </span>
    </div>
  </section>
);

const Panels = () => (
  <aside className="flex w-[230px] shrink-0 flex-col border-r-[3px] border-l-[3px] border-r-[#3c3c3c] border-l-[#242424] bg-[#4a4a4a]">
    <div className="flex h-[11px] shrink-0 items-center justify-end bg-[#2f2f2f] pr-1">
      <Svg w={8} h={6}><path d="M1 1l2.500 2L1 5zM4.500 1L7 3 4.500 5z" fill="#ccc" stroke="#ccc" strokeWidth=".6" /></Svg>
    </div>
    <TabRow tabs={["颜色", "颜色参考", "Kuler", "路径查找器"]} active="颜色" arrows />
    <ColorPanel />
    <TabRow tabs={["色板", "画笔", "符号"]} active="符号" />
    <TabRow tabs={["描边", "渐变", "透明度"]} active="渐变" arrows />
    <TabRow tabs={["外观", "图形样式"]} active="外观" />
    <TabRow tabs={["图层", "画板"]} active="图层" />
    <LayersPanel />
  </aside>
);

export default function App() {
  return (
    <div className="flex h-screen flex-col overflow-hidden bg-[#4a4a4a] font-['Noto_Sans','Noto_Sans_CJK_SC',sans-serif]">
      <MenuBar />
      <ControlBar />
      <div className="flex min-h-0 flex-1">
        <Toolbox />
        <Document />
        <Panels />
      </div>
    </div>
  );
}
